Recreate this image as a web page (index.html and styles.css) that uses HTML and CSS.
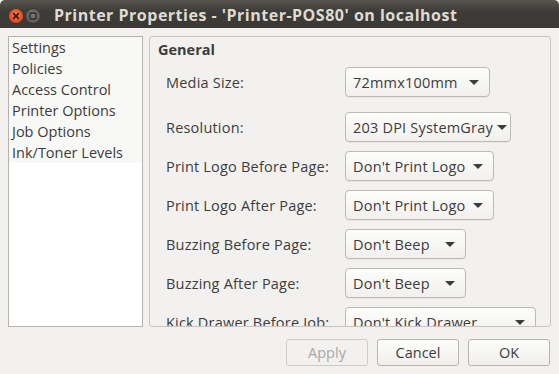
FILE: index.html
```html
<!DOCTYPE html>
<html>
<head>
<meta charset="utf-8">
<link rel="stylesheet" href="styles.css">
</head>
<body>
<div class="window">
  <div class="titlebar">
    <div class="wbtns">
      <span class="wbtn close"><svg width="14" height="14" viewBox="0 0 14 14"><path d="M4.6 4.6 L9.4 9.4 M9.4 4.6 L4.6 9.4" stroke="#3a1a10" stroke-width="1.6" stroke-linecap="round"/></svg></span>
      <span class="wbtn mini"><svg width="14" height="14" viewBox="0 0 14 14"><rect x="4" y="4" width="6" height="6" rx="1" fill="none" stroke="#2f2e2b" stroke-width="1.4"/></svg></span>
    </div>
    <div class="title">Printer Properties - 'Printer-POS80' on localhost</div>
  </div>
  <div class="main">
    <div class="list">
      <div class="rows">
        <div class="item">Settings</div>
        <div class="item">Policies</div>
        <div class="item">Access Control</div>
        <div class="item">Printer Options</div>
        <div class="item">Job Options</div>
        <div class="item">Ink/Toner Levels</div>
      </div>
    </div>
    <div class="frame">
      <div class="heading">General</div>
      <div class="grid">
        <div class="label">Media Size:</div>
        <div class="combo w145"><span>72mmx100mm</span><i class="arrow"></i></div>
        <div class="label">Resolution:</div>
        <div class="combo w166"><span>203 DPI SystemGray</span><i class="arrow"></i></div>
        <div class="label">Print Logo Before Page:</div>
        <div class="combo w149"><span>Don't Print Logo</span><i class="arrow"></i></div>
        <div class="label">Print Logo After Page:</div>
        <div class="combo w149"><span>Don't Print Logo</span><i class="arrow"></i></div>
        <div class="label">Buzzing Before Page:</div>
        <div class="combo w121"><span>Don't Beep</span><i class="arrow"></i></div>
        <div class="label">Buzzing After Page:</div>
        <div class="combo w121"><span>Don't Beep</span><i class="arrow"></i></div>
        <div class="label">Kick Drawer Before Job:</div>
        <div class="combo w191"><span>Don't Kick Drawer</span><i class="arrow"></i></div>
      </div>
    </div>
  </div>
  <div class="actions">
    <button class="btn disabled">Apply</button>
    <button class="btn">Cancel</button>
    <button class="btn">OK</button>
  </div>
</div>
</body>
</html>
```
FILE: styles.css
```css
* { box-sizing: border-box; }
html, body { margin: 0; padding: 0; }
body {
  width: 559px;
  height: 374px;
  overflow: hidden;
  background: #f2f1f0;
  font-family: "Open Sans", "Noto Sans", sans-serif;
  font-size: 14.5px;
  color: #3c3c3c;
}
.window {
  width: 559px;
  height: 374px;
  display: flex;
  flex-direction: column;
  background: #f2f1f0;
}
.titlebar {
  height: 28px;
  flex: none;
  display: flex;
  align-items: center;
  background: linear-gradient(#57554f, #3d3c38 40%, #3a3935);
  border-radius: 5px 5px 0 0;
  padding-left: 9px;
}
.wbtns { display: flex; gap: 3px; margin-top: 3px; }
.wbtn {
  width: 14px;
  height: 14px;
  border-radius: 50%;
  display: flex;
}
.close {
  background: radial-gradient(circle at 50% 40%, #f47a4f, #e0481f 70%);
  box-shadow: 0 0 0 0.5px #5a2a18;
}
.mini {
  background: radial-gradient(circle at 50% 40%, #7b7a76, #5e5d59 70%);
  box-shadow: 0 0 0 0.5px #2c2b28;
}
.title {
  margin-left: 14px;
  margin-top: 2px;
  color: #dfdbd2;
  font-weight: bold;
  font-size: 16px;
  letter-spacing: 0.5px;
  white-space: nowrap;
}
.main {
  display: flex;
  gap: 6px;
  padding: 8px 8px 0 8px;
  height: 299px;
  flex: none;
}
.list {
  width: 135px;
  height: 291px;
  background: #fff;
  border: 1px solid #b6b3ae;
}
.rows { background: #f8f8f7; }
.item {
  height: 21px;
  line-height: 21px;
  padding-left: 3px;
  white-space: nowrap;
}
.frame {
  width: 402px;
  height: 291px;
  border: 1px solid #c8c5c1;
  border-radius: 3px;
  overflow: hidden;
  padding: 3px 0 0 8px;
}
.heading {
  font-weight: bold;
  height: 20px;
  line-height: 20px;
}
.grid {
  display: grid;
  grid-template-columns: 179px auto;
  row-gap: 9px;
  margin-top: 7px;
  padding-left: 8px;
  align-items: center;
  justify-items: start;
}
.grid > .label:nth-child(3) { margin-top: 6px; }
.grid > .combo:nth-child(4) { margin-top: 6px; }
.label { white-space: nowrap; letter-spacing: 0.2px; }
.combo {
  height: 30px;
  display: flex;
  align-items: center;
  padding: 0 10px 0 7px;
  border: 1px solid #bdbab5;
  border-radius: 4px;
  background: linear-gradient(#fdfdfc, #f1f0ee);
  box-shadow: 0 1px 0 rgba(0,0,0,0.04);
  white-space: nowrap;
  letter-spacing: 0.2px;
}
.combo span { flex: 1; }
.arrow {
  width: 0;
  height: 0;
  border-left: 5px solid transparent;
  border-right: 5px solid transparent;
  border-top: 5px solid #3c3c3c;
  margin-left: 4px;
}
.w145 { width: 145px; }
.w166 { width: 166px; }
.w149 { width: 149px; }
.w121 { width: 121px; }
.w191 { width: 191px; }
.actions {
  display: flex;
  justify-content: flex-end;
  gap: 9px;
  padding: 12px 9px 0 0;
}
.btn {
  width: 82px;
  height: 27px;
  font: inherit;
  color: #3c3c3c;
  border: 1px solid #b8b5b0;
  border-radius: 3px;
  background: linear-gradient(#fdfdfc, #f0efed);
  padding: 0;
}
.btn.disabled {
  color: #a9a7a3;
  border-color: #d0cdc9;
  background: #f2f1f0;
}
```
